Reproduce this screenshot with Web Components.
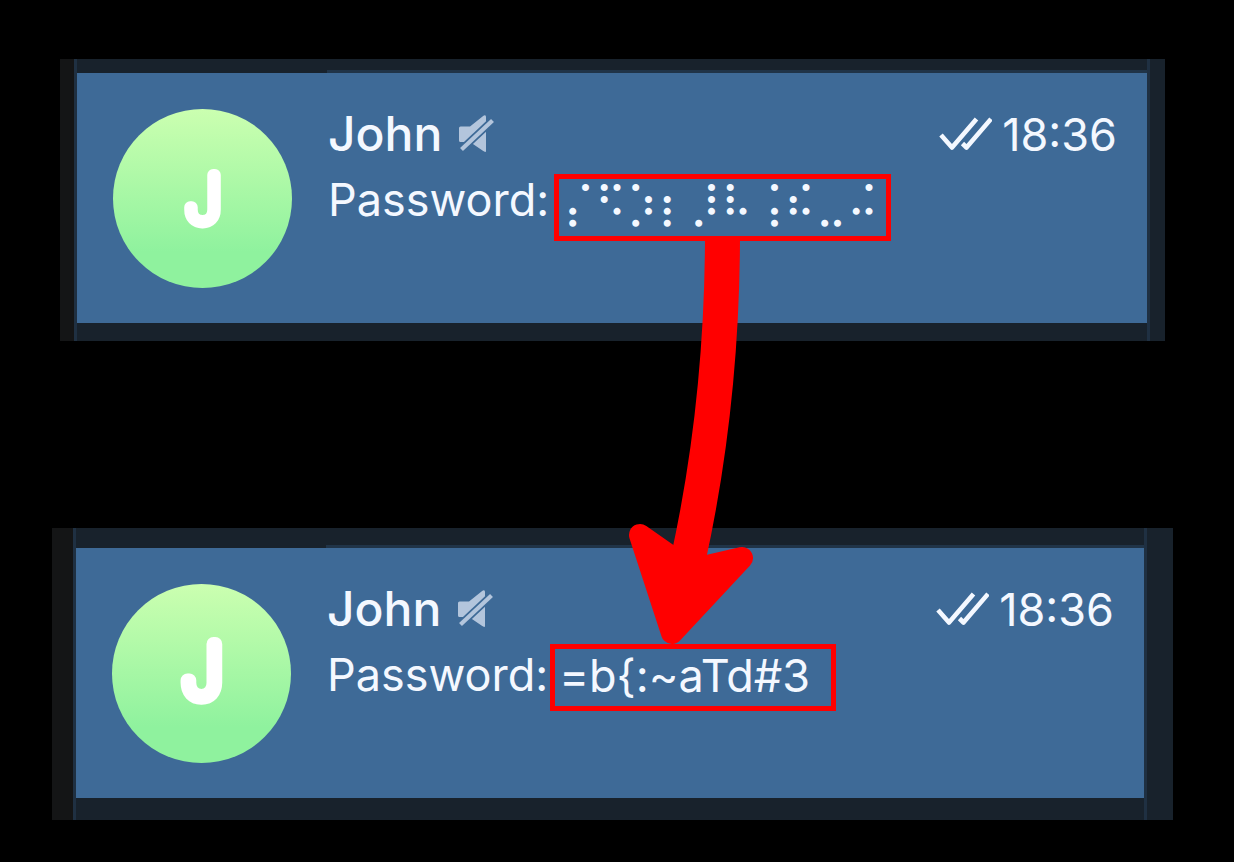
<!DOCTYPE html>
<html lang="en">
<head>
  <meta charset="utf-8">
  <meta name="viewport" content="width=device-width, initial-scale=1">
  <title>Hidden password</title>
  <style>
    body {
      margin: 0;
      background: #000;
      font-family: Inter, "Liberation Sans", sans-serif;
      color: #f4f8ff;
    }
  </style>
</head>
<body>
  <spoiler-demo>
    <chat-panel class="before">
      <chat-row name="John" time="18:36" initial="J">
        <span>Password:</span>
        <marked-text class="dots">⡌⠫⡱⡆⡸⠧⢨⠮⣀⠬</marked-text>
      </chat-row>
    </chat-panel>
    <chat-panel class="after">
      <chat-row name="John" time="18:36" initial="J" class="large">
        <span>Password:</span>
        <marked-text>=b{:~aTd#3</marked-text>
      </chat-row>
    </chat-panel>
    <reveal-arrow slot="overlay"></reveal-arrow>
  </spoiler-demo>

  <script>
    /* The whole page: two panels, one under the other, and an arrow over them */
    class SpoilerDemo extends HTMLElement {
      constructor() {
        super();
        this.attachShadow({ mode: 'open' });
      }

      connectedCallback() {
        this.shadowRoot.innerHTML = `
          <style>
            :host {
              display: block;
              position: relative;
              padding: 59px 61px 42px 52px;
            }
            main {
              display: flex;
              flex-direction: column;
              gap: 187px;
            }
            ::slotted(.before) {
              margin: 0 8px;
              --edge: 14px;
              --top: 14px;
              --bottom: 18px;
              --side: 15px;
            }
            ::slotted(.after) {
              --edge: 21px;
              --top: 20px;
              --bottom: 22px;
              --side: 26px;
            }
            ::slotted([slot="overlay"]) {
              position: absolute;
              left: 620px;
              top: 236px;
            }
          </style>
          <main><slot></slot></main>
          <slot name="overlay"></slot>
        `;
      }
    }

    /* Dark frame round a chat row */
    class ChatPanel extends HTMLElement {
      constructor() {
        super();
        this.attachShadow({ mode: 'open' });
      }

      connectedCallback() {
        this.shadowRoot.innerHTML = `
          <style>
            :host {
              display: flex;
              background: #18222c;
            }
            .edge {
              flex: none;
              width: var(--edge);
              background: #141516;
            }
            .list {
              flex: 1;
              min-width: 0;
              border: solid #1f3042;
              border-width: 0 3px;
            }
            .top {
              display: flex;
              height: var(--top);
              align-items: flex-end;
            }
            .line {
              flex: 1;
              height: 3px;
              margin-left: 250px;
              background: #203448;
            }
            .bottom {
              height: var(--bottom);
            }
            .side {
              flex: none;
              width: var(--side);
            }
          </style>
          <div class="edge"></div>
          <div class="list">
            <div class="top"><div class="line"></div></div>
            <slot></slot>
            <div class="bottom"></div>
          </div>
          <div class="side"></div>
        `;
      }
    }

    /* Selected chat: avatar, name, time and last message */
    class ChatRow extends HTMLElement {
      constructor() {
        super();
        this.attachShadow({ mode: 'open' });
      }

      connectedCallback() {
        this.shadowRoot.innerHTML = `
          <style>
            :host {
              display: flex;
              gap: 36px;
              min-height: 250px;
              box-sizing: border-box;
              padding: 31px 30px 0 36px;
              background: #3e6a97;
              --letter: 64px;
              --stroke: 12px;
            }
            :host(.large) {
              --letter: 72px;
              --stroke: 14px;
            }
            .avatar {
              flex: none;
              width: 179px;
              height: 179px;
              margin-top: 5px;
              border-radius: 50%;
              background: linear-gradient(#cbffb0, #8ff29e 80%);
            }
            .avatar text {
              font-size: var(--letter);
              font-weight: 100;
              fill: #fff;
              stroke: #fff;
              stroke-width: var(--stroke);
              stroke-linejoin: round;
              text-anchor: middle;
            }
            .body {
              flex: 1;
              min-width: 0;
            }
            header {
              display: flex;
              align-items: center;
              gap: 15px;
              height: 60px;
              margin-bottom: 5px;
            }
            h2 {
              margin: 0;
              font-size: 48px;
              font-weight: 500;
              line-height: 60px;
            }
            .status {
              display: flex;
              align-items: center;
              gap: 10px;
              margin-left: auto;
              font-size: 45px;
            }
            .message {
              display: flex;
              align-items: flex-start;
              gap: 2px;
              font-size: 45px;
              line-height: 62px;
              white-space: nowrap;
            }
          </style>
          <svg class="avatar" viewBox="0 0 179 179" aria-hidden="true">
            <text x="90" y="113">${this.getAttribute('initial')}</text>
          </svg>
          <div class="body">
            <header>
              <h2>${this.getAttribute('name')}</h2>
              <svg width="38" height="40" viewBox="0 0 38 40" role="img" aria-label="Muted">
                <mask id="cut">
                  <rect width="38" height="40" fill="#fff"/>
                  <path d="M-1 40.6L41 1.3" stroke="#000" stroke-width="7.6"/>
                </mask>
                <path d="M3.500 12.500h9.500L25.500 2.500Q29 0 29 3v34q0 2-3.500-.5L13 28H3.500Q2 28 2 26.500V14q0-1.500 1.500-1.500z" fill="#b3c5dc" mask="url(#cut)"/>
                <path d="M4.500 35.500L35.500 6.500" stroke="#b3c5dc" stroke-width="4.200"/>
              </svg>
              <div class="status">
                <svg width="53" height="36" viewBox="0 0 53 36" fill="none" stroke="#f4f8ff" stroke-width="4.600" stroke-linejoin="round" role="img" aria-label="Read">
                  <path d="M2 19l11 12.500L37.500 3"/>
                  <path d="M23.500 27.500l4 4L52 3"/>
                </svg>
                <time>${this.getAttribute('time')}</time>
              </div>
            </header>
            <div class="message"><slot></slot></div>
          </div>
        `;
      }
    }

    /* Red frame round a piece of text */
    class MarkedText extends HTMLElement {
      constructor() {
        super();
        this.attachShadow({ mode: 'open' });
      }

      connectedCallback() {
        this.shadowRoot.innerHTML = `
          <style>
            :host {
              display: block;
              box-sizing: border-box;
              height: 67px;
              padding: 0 21px 0 4px;
              border: 5px solid #f00;
              line-height: 54px;
            }
            :host(.dots) {
              margin: 5px 0 0 3px;
              padding: 0 8px 0 4px;
              font-family: "DejaVu Serif", serif;
              font-size: 43px;
              line-height: 48px;
            }
          </style>
          <slot></slot>
        `;
      }
    }

    /* Curved arrow from the first frame down to the second */
    class RevealArrow extends HTMLElement {
      constructor() {
        super();
        this.attachShadow({ mode: 'open' });
      }

      connectedCallback() {
        this.shadowRoot.innerHTML = `
          <style>
            :host { display: block; pointer-events: none; }
            svg { display: block; }
          </style>
          <svg width="140" height="412" viewBox="620 236 140 412" aria-hidden="true">
            <path d="M722.5 238Q722 405 688 560" fill="none" stroke="#f00" stroke-width="35"/>
            <path d="M640 535L690 570L742 558L672 633z" fill="#f00" stroke="#f00" stroke-width="22" stroke-linejoin="round"/>
          </svg>
        `;
      }
    }

    customElements.define('spoiler-demo', SpoilerDemo);
    customElements.define('chat-panel', ChatPanel);
    customElements.define('chat-row', ChatRow);
    customElements.define('marked-text', MarkedText);
    customElements.define('reveal-arrow', RevealArrow);
  </script>
</body>
</html>
